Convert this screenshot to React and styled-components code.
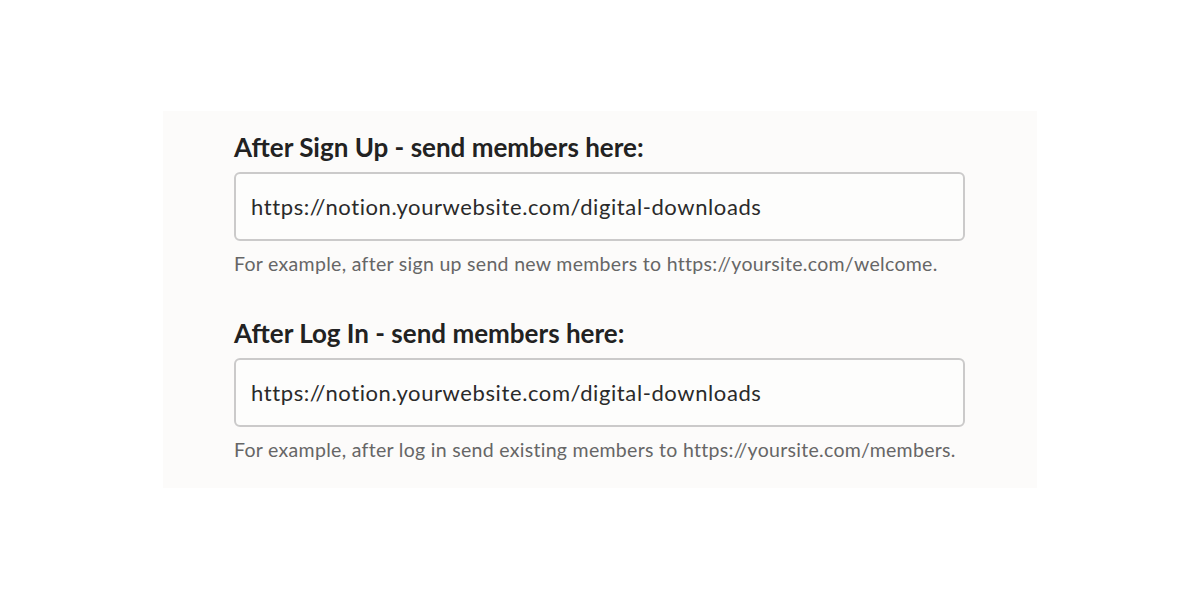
import React from 'react';
import styled, { createGlobalStyle } from 'styled-components';

const GlobalStyle = createGlobalStyle`
  body {
    margin: 0;
    background: #ffffff;
    font-family: Lato, "Noto Sans", sans-serif;
  }
`;

const Page = styled.main`
  padding-top: 111px;
  display: flex;
  justify-content: center;
`;

const Panel = styled.section`
  width: 874px;
  box-sizing: border-box;
  background: #fcfbfa;
  padding: 21px 72px 26px 71px;
  display: flex;
  flex-direction: column;
  gap: 42px;
`;

const Field = styled.div`
  display: flex;
  flex-direction: column;
`;

const Label = styled.label`
  font-size: 26px;
  font-weight: 700;
  line-height: 31px;
  color: #222222;
  margin-bottom: 9px;
`;

const UrlInput = styled.input`
  box-sizing: border-box;
  width: 731px;
  height: 69px;
  border: 2px solid #cbcaca;
  border-radius: 6px;
  background: #fdfdfc;
  padding: 0 15px;
  font-family: inherit;
  font-size: 22px;
  letter-spacing: 0.6px;
  color: #2a2a2a;
  outline: none;
`;

const Hint = styled.p`
  margin: 11px 0 0;
  font-size: 19.5px;
  letter-spacing: 0.3px;
  line-height: 24px;
  color: #666666;
`;

const fields = [
  {
    label: 'After Sign Up - send members here:',
    hint: 'For example, after sign up send new members to https://yoursite.com/welcome.',
  },
  {
    label: 'After Log In - send members here:',
    hint: 'For example, after log in send existing members to https://yoursite.com/members.',
  },
];

export default function App() {
  return (
    <>
      <GlobalStyle />
      <Page>
        <Panel>
          {fields.map((f) => (
            <Field key={f.label}>
              <Label>{f.label}</Label>
              <UrlInput readOnly value="https://notion.yourwebsite.com/digital-downloads" />
              <Hint>{f.hint}</Hint>
            </Field>
          ))}
        </Panel>
      </Page>
    </>
  );
}
